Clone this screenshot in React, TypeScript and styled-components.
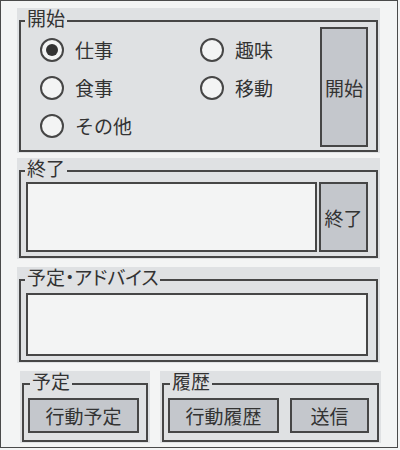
import React, { useState } from "react";
import styled, { createGlobalStyle } from "styled-components";

const GlobalStyle = createGlobalStyle`
  html, body {
    margin: 0;
    padding: 0;
    background: #f3f4f4;
  }
  body {
    font-family: "Noto Sans CJK JP", "Noto Sans", sans-serif;
    color: #333;
  }
  * {
    box-sizing: border-box;
  }
`;

const Window = styled.div`
  width: 398px;
  height: 448px;
  border: 1px solid #4a4a4a;
  background: #f3f4f4;
  padding: 7px 17px 0 16px;
  display: flex;
  flex-direction: column;
`;

const Panel = styled.div<{ $top?: number }>`
  background: #dfe1e3;
  padding: 0 2px 1px 2px;
  margin-top: ${(p) => p.$top ?? 0}px;
`;

const Frame = styled.fieldset`
  margin: 0;
  padding: 0;
  min-width: 0;
  border: 2px solid #464646;
`;

const Legend = styled.legend<{ $indent?: number }>`
  font-size: 19px;
  line-height: 19px;
  padding: 0 2px 6px;
  margin-left: ${(p) => p.$indent ?? 4}px;
  font-feature-settings: "palt";
`;

const StartBody = styled.div`
  display: flex;
  margin-top: -6px;
  padding: 0 8px 3px 19px;
`;

const RadioGrid = styled.div`
  flex: 1;
  display: grid;
  grid-template-columns: 160px auto;
  grid-auto-rows: 24px;
  row-gap: 14px;
  padding-top: 11px;
  align-content: start;
`;

const RadioLabel = styled.label`
  display: flex;
  align-items: center;
  gap: 11px;
  font-size: 19px;
  line-height: 24px;
  cursor: pointer;
`;

const RadioInput = styled.input`
  appearance: none;
  margin: 0;
  width: 24px;
  height: 24px;
  border: 2px solid #464646;
  border-radius: 50%;
  background: #f3f4f4;
  display: grid;
  place-items: center;

  &:checked::after {
    content: "";
    width: 12px;
    height: 12px;
    border-radius: 50%;
    background: #333;
  }
`;

const Button = styled.button<{ $w: number; $h: number }>`
  width: ${(p) => p.$w}px;
  height: ${(p) => p.$h}px;
  flex-shrink: 0;
  padding: 0;
  margin: 0;
  border: 2px solid #464646;
  border-radius: 0;
  background: #c4c7cc;
  color: #333;
  font-family: inherit;
  font-size: 19px;
  line-height: 1;
  cursor: pointer;
`;

const FieldRow = styled.div<{ $top: number; $bottom: number }>`
  display: flex;
  gap: 2px;
  margin-top: ${(p) => p.$top}px;
  padding: 0 8px ${(p) => p.$bottom}px 5px;
`;

const TextBox = styled.textarea<{ $h: number }>`
  flex: 1;
  height: ${(p) => p.$h}px;
  margin: 0;
  resize: none;
  border: 2px solid #464646;
  border-radius: 0;
  background: #f3f4f4;
  font-family: inherit;
  font-size: 16px;
  color: #333;
  outline: none;
`;

const BottomRow = styled.div`
  display: flex;
  gap: 10px;
  margin-top: 8px;
  padding-left: 3px;
`;

const ButtonRow = styled.div`
  display: flex;
  gap: 11px;
  margin-top: 2px;
  padding: 0 8px 7px 4px;
`;

const activities = [
  ["仕事", "趣味"],
  ["食事", "移動"],
  ["その他"],
];

export default function App() {
  const [activity, setActivity] = useState("仕事");

  return (
    <>
      <GlobalStyle />
      <Window>
        <Panel>
          <Frame>
            <Legend>開始</Legend>
            <StartBody>
              <RadioGrid>
                {activities.flat().map((name) => (
                  <RadioLabel key={name}>
                    <RadioInput
                      type="radio"
                      name="activity"
                      checked={activity === name}
                      onChange={() => setActivity(name)}
                    />
                    {name}
                  </RadioLabel>
                ))}
              </RadioGrid>
              <Button $w={48} $h={120}>
                開始
              </Button>
            </StartBody>
          </Frame>
        </Panel>

        <Panel $top={5}>
          <Frame>
            <Legend>終了</Legend>
            <FieldRow $top={-1} $bottom={4}>
              <TextBox $h={70} />
              <Button $w={49} $h={70}>
                終了
              </Button>
            </FieldRow>
          </Frame>
        </Panel>

        <Panel $top={8}>
          <Frame>
            <Legend>予定・アドバイス</Legend>
            <FieldRow $top={1} $bottom={4}>
              <TextBox $h={63} />
            </FieldRow>
          </Frame>
        </Panel>

        <BottomRow>
          <Panel style={{ width: 130 }}>
            <Frame>
              <Legend $indent={6}>予定</Legend>
              <ButtonRow>
                <Button $w={111} $h={35}>
                  行動予定
                </Button>
              </ButtonRow>
            </Frame>
          </Panel>
          <Panel style={{ flex: 1 }}>
            <Frame>
              <Legend $indent={6}>履歴</Legend>
              <ButtonRow>
                <Button $w={111} $h={35}>
                  行動履歴
                </Button>
                <Button $w={79} $h={35}>
                  送信
                </Button>
              </ButtonRow>
            </Frame>
          </Panel>
        </BottomRow>
      </Window>
    </>
  );
}
